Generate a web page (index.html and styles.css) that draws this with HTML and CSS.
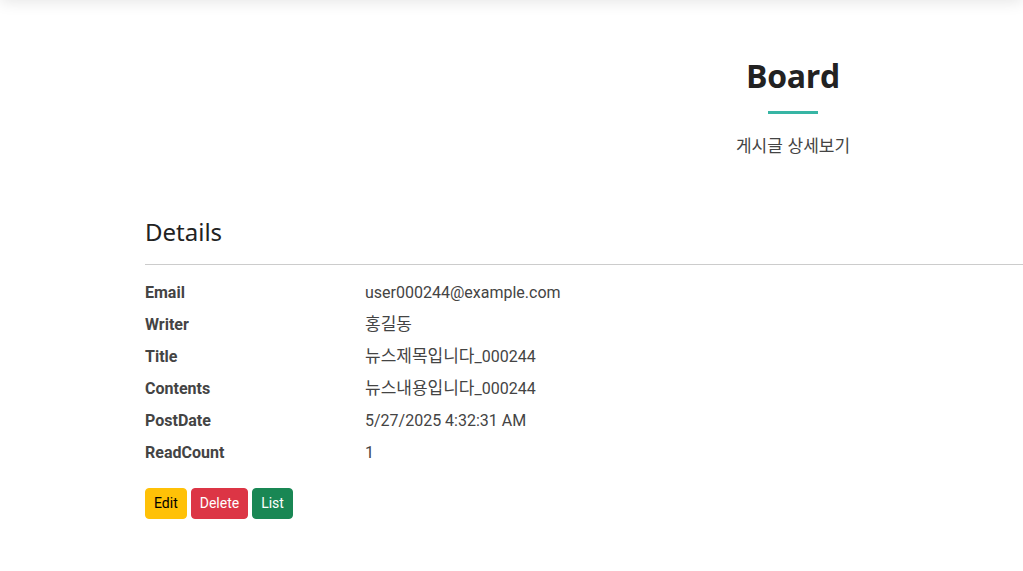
FILE: index.html
```html
<!DOCTYPE html>
<html lang="ko">
<head>
<meta charset="utf-8">
<title>Board</title>
<link rel="stylesheet" href="styles.css">
</head>
<body>
<header class="header"></header>
<div class="viewport">
<main class="container">
  <section class="section-title">
    <h2>Board</h2>
    <p>게시글 상세보기</p>
  </section>
  <section class="details">
    <h4>Details</h4>
    <hr>
    <dl class="row">
      <dt>Email</dt><dd>user000244@example.com</dd>
      <dt>Writer</dt><dd><span class="ko">홍길동</span></dd>
      <dt>Title</dt><dd><span class="ko">뉴스제목입니다</span>_000244</dd>
      <dt>Contents</dt><dd><span class="ko">뉴스내용입니다</span>_000244</dd>
      <dt>PostDate</dt><dd>5/27/2025 4:32:31 AM</dd>
      <dt>ReadCount</dt><dd>1</dd>
    </dl>
    <div class="actions">
      <a class="btn btn-warning">Edit</a>
      <a class="btn btn-danger">Delete</a>
      <a class="btn btn-success">List</a>
    </div>
  </section>
</main>
</div>
</body>
</html>
```
FILE: styles.css
```css
html, body {
  margin: 0;
  padding: 0;
  overflow: hidden;
  background: #fff;
}
body {
  font-family: Roboto, "Noto Sans CJK KR", sans-serif;
  color: #444;
  width: 1023px;
  height: 571px;
  position: relative;
}
.header {
  position: absolute;
  left: 0;
  right: 0;
  top: -20px;
  height: 20px;
  box-shadow: 0 2px 15px rgba(0, 0, 0, 0.1);
}
.viewport {
  width: 1023px;
  height: 571px;
  overflow: hidden;
}
.container {
  width: 1296px;
  margin-left: 145px;
  padding-top: 56px;
}
.section-title {
  text-align: center;
}
.section-title h2 {
  font-family: "Open Sans", "Noto Sans", sans-serif;
  font-weight: 700;
  font-size: 32px;
  color: #222;
  margin: 0;
  line-height: 40px;
  letter-spacing: -0.3px;
}
.section-title h2::after {
  content: "";
  display: block;
  width: 50px;
  height: 3px;
  background: #37b5a4;
  margin: 15px auto 0;
}
.section-title p {
  margin: 20px 0 0;
  font-family: "Noto Sans CJK KR", sans-serif;
  font-size: 17px;
  line-height: 22px;
  color: #444;
}
.details {
  margin-top: 61px;
}
.details h4 {
  font-family: "Noto Sans", "Open Sans", sans-serif;
  font-weight: 400;
  font-size: 24px;
  line-height: 29px;
  color: #222;
  margin: 0;
}
.details hr {
  border: 0;
  border-top: 1px solid #ccc;
  margin: 18px 0 16px;
  width: 1296px;
}
.row {
  display: grid;
  grid-template-columns: 220px 1fr;
  grid-auto-rows: 24px;
  margin: 0;
  row-gap: 8px;
  font-size: 16px;
  line-height: 24px;
}
.row dt {
  font-weight: 700;
  color: #444;
}
.row dd {
  margin: 0;
  height: 24px;
  color: #444;
  font-family: Roboto, "Noto Sans CJK KR", sans-serif;
}
.ko {
  font-family: "Noto Sans CJK KR", sans-serif;
  font-size: 17px;
  line-height: 16px;
}
.actions {
  margin-top: 23px;
  display: flex;
  gap: 4px;
}
.btn {
  display: inline-block;
  font-family: Roboto, sans-serif;
  font-size: 14px;
  line-height: 21px;
  padding: 4px 8px;
  border: 1px solid transparent;
  border-radius: 4px;
  cursor: pointer;
}
.btn-warning { background: #ffc107; border-color: #ffc107; color: #000; }
.btn-danger { background: #dc3545; border-color: #dc3545; color: #fff; }
.btn-success { background: #198754; border-color: #198754; color: #fff; }
```
